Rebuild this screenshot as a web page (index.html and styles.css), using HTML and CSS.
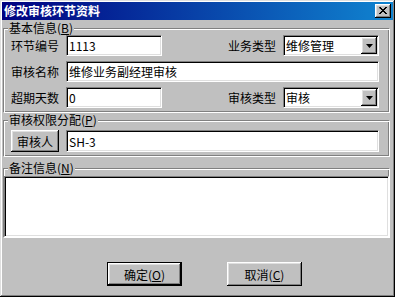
FILE: index.html
```html
<!DOCTYPE html>
<html lang="zh-CN">
<head>
    <meta charset="UTF-8">
    <title>修改审核环节资料</title>
    <link rel="stylesheet" href="styles.css">
</head>
<body>
    <div class="window">
        <div class="titlebar">
            <span class="title">修改审核环节资料</span>
            <button class="close-btn">
                <svg width="8" height="7" viewBox="0 0 8 7">
                    <path d="M0 0h2v1h1v1h2v-1h1v-1h2v1h-1v1h-1v1h-1v1h1v1h1v1h1v1h-2v-1h-1v-1h-2v1h-1v1h-2v-1h1v-1h1v-1h1v-1h-1v-1h-1z" fill="#000"/>
                </svg>
            </button>
        </div>

        <fieldset class="group group-basic">
            <legend>基本信息(<u>B</u>)</legend>
            <div class="row">
                <span class="label">环节编号</span>
                <div class="field field-short">1113</div>
                <span class="label label-right">业务类型</span>
                <div class="field combo">
                    <span class="combo-text">维修管理</span>
                    <span class="combo-btn">
                        <svg width="7" height="4" viewBox="0 0 7 4"><path d="M0 0h7l-3.5 4z" fill="#000"/></svg>
                    </span>
                </div>
            </div>
            <div class="row">
                <span class="label">审核名称</span>
                <div class="field field-wide">维修业务副经理审核</div>
            </div>
            <div class="row">
                <span class="label">超期天数</span>
                <div class="field field-short">0</div>
                <span class="label label-right">审核类型</span>
                <div class="field combo">
                    <span class="combo-text">审核</span>
                    <span class="combo-btn">
                        <svg width="7" height="4" viewBox="0 0 7 4"><path d="M0 0h7l-3.5 4z" fill="#000"/></svg>
                    </span>
                </div>
            </div>
        </fieldset>

        <fieldset class="group group-rights">
            <legend>审核权限分配(<u>P</u>)</legend>
            <div class="row row-tall">
                <button class="btn btn-small">审核人</button>
                <div class="field field-wide">SH-3</div>
            </div>
        </fieldset>

        <fieldset class="group group-notes">
            <legend>备注信息(<u>N</u>)</legend>
            <div class="field notes"></div>
        </fieldset>

        <div class="buttons">
            <button class="btn btn-default">确定(<u>O</u>)</button>
            <button class="btn btn-action">取消(<u>C</u>)</button>
        </div>
    </div>
</body>
</html>
```

FILE: styles.css
```css
body {
    margin: 0;
    font-family: "Noto Sans CJK SC", "Liberation Sans", sans-serif;
    font-size: 12px;
    color: #000;
}

.window {
    width: 395px;
    height: 297px;
    box-sizing: border-box;
    padding: 2px;
    background-color: #c0c0c0;
    box-shadow: inset -1px -1px #000, inset 1px 1px #dfdfdf, inset -2px -2px #808080, inset 2px 2px #fff;
    display: flex;
    flex-direction: column;
}

/* title bar */
.titlebar {
    height: 18px;
    display: flex;
    align-items: center;
    justify-content: space-between;
    padding: 0 2px;
    background: linear-gradient(90deg, #000080, #1084d0);
    color: #fff;
    font-weight: bold;
}

.title {
    line-height: 18px;
}

.close-btn {
    width: 16px;
    height: 14px;
    padding: 0;
    border: none;
    background-color: #c0c0c0;
    box-shadow: inset -1px -1px #000, inset 1px 1px #fff, inset -2px -2px #808080, inset 2px 2px #dfdfdf;
    display: flex;
    align-items: center;
    justify-content: center;
}

.close-btn svg {
    display: block;
    margin: 0 0 1px 0;
}

/* group boxes */
.group {
    margin: 1px 3px 0 1px;
    padding: 0 10px 4px 7px;
    min-width: 0;
    border: 1px solid;
    border-color: #808080 #fff #fff #808080;
    box-shadow: inset 1px 1px #fff, inset -1px -1px #808080;
}

.group legend {
    height: 14px;
    line-height: 14px;
    padding: 0 1px;
    margin-left: -3px;
    background-color: #c0c0c0;
}

.group-rights {
    margin-top: 0;
    padding-top: 3px;
}

.group-notes {
    margin-top: 4px;
    padding: 1px 0 0 0;
}

.group-notes legend {
    margin-left: 4px;
}

.row {
    display: flex;
    align-items: center;
    height: 21px;
}

.row + .row {
    margin-top: 5px;
}

.row-tall {
    height: 22px;
}

.label {
    width: 55px;
    flex-shrink: 0;
    white-space: nowrap;
}

.label-right {
    margin-left: auto;
    width: auto;
    padding-right: 7px;
}

/* sunken fields */
.field {
    height: 100%;
    box-sizing: border-box;
    padding-left: 2px;
    background-color: #fff;
    border: 1px solid;
    border-color: #808080 #fff #fff #808080;
    box-shadow: inset 1px 1px #000, inset -1px -1px #dfdfdf;
    display: flex;
    align-items: center;
    white-space: nowrap;
}

.field-short {
    width: 96px;
}

.field-wide {
    flex: 1;
}

.combo {
    width: 96px;
    padding-right: 1px;
}

.combo-text {
    flex: 1;
}

.combo-btn {
    width: 16px;
    height: 17px;
    background-color: #c0c0c0;
    box-shadow: inset -1px -1px #000, inset 1px 1px #fff, inset -2px -2px #808080, inset 2px 2px #dfdfdf;
    display: flex;
    align-items: center;
    justify-content: center;
}

.notes {
    height: 61px;
}

/* push buttons */
.btn {
    font-family: inherit;
    font-size: 12px;
    color: #000;
    padding: 0;
    border: none;
    background-color: #c0c0c0;
    box-shadow: inset -1px -1px #000, inset 1px 1px #fff, inset -2px -2px #808080, inset 2px 2px #dfdfdf;
}

.btn-small {
    width: 48px;
    height: 22px;
    margin-right: 7px;
    flex-shrink: 0;
}

.buttons {
    display: flex;
    gap: 45px;
    margin-top: 24px;
    padding-left: 105px;
}

.btn-default,
.btn-action {
    width: 75px;
    height: 24px;
}

.btn-default {
    outline: 1px solid #000;
    outline-offset: -1px;
    box-shadow: inset -2px -2px #000, inset 2px 2px #fff, inset -3px -3px #808080, inset 3px 3px #dfdfdf;
}
```
